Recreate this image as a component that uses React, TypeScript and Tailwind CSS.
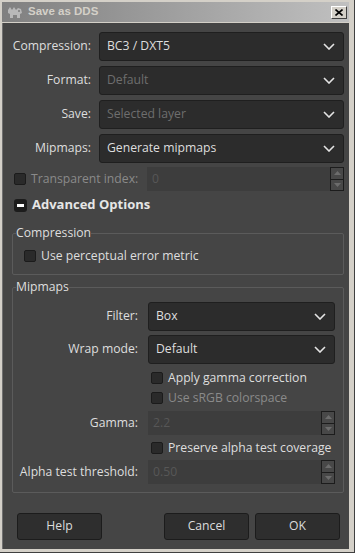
import type { ReactNode } from "react";

const FONT = "font-['Open_Sans',_'Noto_Sans',_sans-serif]";

const Chevron = () => (
  <svg width="12" height="7" viewBox="0 0 12 7" className="shrink-0">
    <polyline points="1,1 6,6 11,1" fill="none" stroke="#e4e4e4" strokeWidth="1.6" />
  </svg>
);

const Combo = ({ value, disabled }: { value: string; disabled?: boolean }) => (
  <div className="flex h-[29px] items-center justify-between rounded-[3px] border border-[#1f1f1f] bg-[#2c2c2c] pl-[7px] pr-[8px]">
    <span className={disabled ? "text-[#6e6e6e]" : "text-[#dedede]"}>{value}</span>
    <Chevron />
  </div>
);

const Spin = ({ value }: { value: string }) => (
  <div className="flex h-[24px] items-stretch bg-[#3d3d3d]">
    <span className="flex-1 pl-[5px] leading-[24px] text-[#575757]">{value}</span>
    <div className="flex w-[14px] flex-col border border-[#1c1c1c] bg-[#484848]">
      <div className="flex flex-1 items-center justify-center border-b border-[#1c1c1c]">
        <svg width="7" height="4" viewBox="0 0 7 4">
          <polygon points="0,4 3.5,0 7,4" fill="#6c6c6c" />
        </svg>
      </div>
      <div className="flex flex-1 items-center justify-center">
        <svg width="7" height="4" viewBox="0 0 7 4">
          <polygon points="0,0 3.5,4 7,0" fill="#6c6c6c" />
        </svg>
      </div>
    </div>
  </div>
);

const Check = ({ label, disabled }: { label: string; disabled?: boolean }) => (
  <div className="flex h-[16px] items-center gap-[5px] whitespace-nowrap">
    <span className="h-[12px] w-[12px] shrink-0 rounded-[2px] border border-[#1b1b1b] bg-[#2a2a2a]" />
    <span className={disabled ? "text-[#8a8a8a]" : "text-[#dedede]"}>{label}</span>
  </div>
);

const Label = ({ text, className }: { text: string; className?: string }) => (
  <div className={`flex justify-end whitespace-nowrap ${className ?? ""}`}>
    <span>{text}</span>
  </div>
);

const Frame = ({ title, children, className }: { title: string; children: ReactNode; className?: string }) => (
  <fieldset className={`rounded-[2px] border border-[#5b5b5b] ${className ?? ""}`}>
    <legend className="ml-[3px] h-[16px] leading-[16px] text-[#dedede]">{title}</legend>
    {children}
  </fieldset>
);

const Btn = ({ label }: { label: string }) => (
  <button className="h-[27px] w-[85px] rounded-[3px] border border-[#1c1c1c] bg-[#2e2e2e] text-[#dcdcdc]">
    {label}
  </button>
);

export default function App() {
  return (
    <div className={`flex h-[553px] w-[355px] flex-col border-r border-b border-[#404040] bg-[#d4d0c8] pt-[2px] pr-[5px] pb-[3px] pl-[2px] text-[12.2px] ${FONT}`}>
      {/* title bar */}
      <div className="flex h-[20px] items-center bg-gradient-to-r from-[#808080] to-[#c0c0c0] pl-[4px] pr-[2px]">
        <svg width="18" height="16" viewBox="0 0 18 16" className="shrink-0">
          <path d="M2 6 L4 3 L6 6 L8 3 L10 6 L12 4 L15 5 L16 9 L14 10 L14 14 L11 14 L11 11 L7 11 L7 14 L4 14 L4 10 L2 9 Z" fill="#b8b8b8" />
          <circle cx="13" cy="7" r="1" fill="#7a7a7a" />
        </svg>
        <span className="ml-[4px] font-['Liberation_Sans',_sans-serif] text-[11.5px] font-bold text-[#d4d0c8]">Save as DDS</span>
        <div className="ml-auto flex h-[13px] w-[16px] items-center justify-center border-t border-l border-white border-r border-b border-r-[#404040] border-b-[#404040] bg-[#d4d0c8]">
          <svg width="8" height="7" viewBox="0 0 8 7">
            <path d="M0.5 0.5 L7.5 6.5 M7.5 0.5 L0.5 6.5" stroke="#000" strokeWidth="1.6" />
          </svg>
        </div>
      </div>

      {/* body */}
      <div className="mt-[1px] flex flex-1 flex-col border-l border-[#707070] bg-[#454545] pt-[9px] pr-[5px] pb-[9px] pl-[9px] text-[#dedede]">
        <div className="grid grid-cols-[79px_1fr] items-center gap-x-[8px] gap-y-[5px]">
          <Label text="Compression:" />
          <Combo value="BC3 / DXT5" />
          <Label text="Format:" />
          <Combo value="Default" disabled />
          <Label text="Save:" />
          <Combo value="Selected layer" disabled />
          <Label text="Mipmaps:" />
          <Combo value="Generate mipmaps" />
        </div>

        <div className="mt-[4px] flex h-[24px] items-center">
          <div className="w-[135px] pl-[2px]">
            <Check label="Transparent index:" disabled />
          </div>
          <div className="flex-1">
            <Spin value="0" />
          </div>
        </div>

        <div className="mt-[5px] flex h-[18px] items-center gap-[5px] pl-[2px]">
          <span className="flex h-[13px] w-[13px] items-center justify-center rounded-[3px] bg-[#1c1c1c]">
            <span className="h-[3px] w-[7px] bg-white" />
          </span>
          <span className="text-[13px] font-bold text-[#e6e6e6]">Advanced Options</span>
        </div>

        <Frame title="Compression" className="mt-[11px]">
          <div className="px-[11px] pt-[7px] pb-[10px]">
            <Check label="Use perceptual error metric" />
          </div>
        </Frame>

        <Frame title="Mipmaps" className="mt-[4px]">
          <div className="grid grid-cols-[116px_1fr] items-center gap-x-[10px] pt-[7px] pr-[8px] pb-[8px] pl-[9px]">
            <Label text="Filter:" />
            <Combo value="Box" />
            <Label text="Wrap mode:" className="mt-[4px]" />
            <div className="mt-[4px]">
              <Combo value="Default" />
            </div>
            <span />
            <div className="mt-[6px] pl-[3px]">
              <Check label="Apply gamma correction" />
            </div>
            <span />
            <div className="mt-[4px] pl-[3px]">
              <Check label="Use sRGB colorspace" disabled />
            </div>
            <Label text="Gamma:" className="mt-[5px]" />
            <div className="mt-[5px]">
              <Spin value="2.2" />
            </div>
            <span />
            <div className="mt-[5px] pl-[3px]">
              <Check label="Preserve alpha test coverage" />
            </div>
            <Label text="Alpha test threshold:" className="mt-[4px]" />
            <div className="mt-[4px]">
              <Spin value="0.50" />
            </div>
          </div>
        </Frame>

        <div className="mt-auto flex items-center pl-[5px] pr-[4px]">
          <Btn label="Help" />
          <div className="ml-auto flex gap-[6px]">
            <Btn label="Cancel" />
            <Btn label="OK" />
          </div>
        </div>
      </div>
    </div>
  );
}
